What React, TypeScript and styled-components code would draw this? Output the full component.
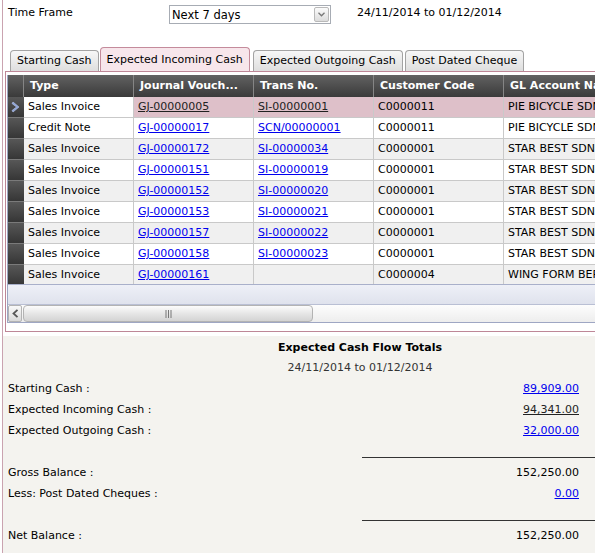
import React from 'react';
import styled, { createGlobalStyle } from 'styled-components';

const GlobalStyle = createGlobalStyle`
  html, body { margin: 0; padding: 0; background: #fff; }
  body {
    font-family: "DejaVu Sans", Verdana, sans-serif;
    font-size: 11px;
    color: #000;
  }
`;

const cols = '16px 110px 120px 120px 130px 200px';

const Page = styled.div`
  width: 595px;
  height: 553px;
  overflow: hidden;
  background: #fff;
`;

const Frame = styled.div`
  margin-left: 2px;
  border-left: 1px solid #caa3b0;
  height: 100%;
  width: 760px;
  display: flex;
  flex-direction: column;
`;

const FilterRow = styled.div`
  display: flex;
  align-items: flex-start;
  padding-top: 5px;
  height: 19px;
`;

const Label = styled.div`
  width: 161px;
  padding: 1px 0 0 5px;
  line-height: 14px;
`;

const Select = styled.div`
  box-sizing: border-box;
  width: 162px;
  height: 19px;
  border: 1px solid #a7acb4;
  background: #fff;
  display: flex;
  align-items: center;
  justify-content: space-between;
  padding-left: 2px;
  font-size: 11.5px;
`;

const DropButton = styled.div`
  box-sizing: border-box;
  width: 15px;
  height: 15px;
  margin-right: 1px;
  border: 1px solid #b9b9b9;
  border-radius: 2px;
  background: linear-gradient(#fbfbfb, #dcdcdc);
  display: flex;
  align-items: center;
  justify-content: center;
`;

const DateText = styled.div`
  margin-left: 26px;
  padding-top: 1px;
  line-height: 14px;
`;

const TabStrip = styled.div`
  margin-top: 23px;
  display: flex;
  align-items: flex-end;
  height: 24px;
  padding-left: 7px;
`;

const Tab = styled.div<{ $active?: boolean }>`
  box-sizing: border-box;
  height: ${p => (p.$active ? '24px' : '21px')};
  padding: 0 6px;
  line-height: ${p => (p.$active ? '23px' : '19px')};
  margin: ${p => (p.$active ? '0 3px 0 -1px' : '0 2px 0 0')};
  border: 1px solid ${p => (p.$active ? '#c48b9b' : '#a3a3a3')};
  border-bottom: none;
  border-radius: 4px 4px 0 0;
  background: ${p => (p.$active ? '#f7e6eb' : 'linear-gradient(#f7f7f7, #dedede)')};
  white-space: nowrap;
`;

const Panel = styled.div`
  margin-left: 2px;
  border: 1px solid #be8797;
  padding: 3px 1px 8px 1px;
  width: 740px;
`;

const Grid = styled.div`
  border: 1px solid #9ea6c3;
  border-top: none;
  width: 698px;
`;

const HeadRow = styled.div`
  display: grid;
  grid-template-columns: ${cols};
  height: 22px;
  background: linear-gradient(#626262, #3a3a3a);
`;

const HeadCell = styled.div`
  box-sizing: border-box;
  border-right: 1px solid #858585;
  padding-left: 6px;
  line-height: 22px;
  color: #fff;
  font-weight: bold;
  white-space: nowrap;
  overflow: hidden;
`;

const Body = styled.div`
  height: 187px;
  overflow: hidden;
`;

const Row = styled.div`
  display: grid;
  grid-template-columns: ${cols};
  height: 21px;
`;

const Indicator = styled.div`
  box-sizing: border-box;
  border-bottom: 1px solid #7a7a7a;
  background: linear-gradient(#575757, #363636);
  display: flex;
  align-items: center;
  justify-content: center;
`;

const Cell = styled.div<{ $bg: string }>`
  box-sizing: border-box;
  border-right: 1px solid #c9c9c9;
  border-bottom: 1px solid #c9c9c9;
  background: ${p => p.$bg};
  padding-left: 4px;
  line-height: 20px;
  white-space: nowrap;
  overflow: hidden;
`;

const Link = styled.span<{ $dark?: boolean }>`
  color: ${p => (p.$dark ? '#222' : '#0000ee')};
  text-decoration: underline;
  cursor: pointer;
`;

const Footer = styled.div`
  height: 19px;
  border-top: 1px solid #a9b0ca;
  border-bottom: 1px solid #b9bfd4;
  background: linear-gradient(#eef0f7, #dfe2ed);
`;

const ScrollBar = styled.div`
  display: flex;
  height: 17px;
  background: linear-gradient(#fdfdfd, #ededed);
`;

const ScrollButton = styled.div`
  box-sizing: border-box;
  width: 14px;
  border: 1px solid #b3b3b3;
  border-radius: 2px;
  background: linear-gradient(#f9f9f9, #d9d9d9);
  display: flex;
  align-items: center;
  justify-content: center;
`;

const Thumb = styled.div`
  box-sizing: border-box;
  width: 290px;
  margin-left: 1px;
  border: 1px solid #b3b3b3;
  border-radius: 4px;
  background: linear-gradient(#fcfcfc, #e6e6e6 50%, #d3d3d3);
  display: flex;
  align-items: center;
  justify-content: center;
`;

const Totals = styled.div`
  margin-top: 4px;
  flex: 1;
  background: #f4f3ef;
  width: 714px;
`;

const Title = styled.div`
  margin-top: 5px;
  line-height: 14px;
  font-weight: bold;
  text-align: center;
`;

const SubTitle = styled.div`
  margin-top: 6px;
  line-height: 14px;
  text-align: center;
  color: #333;
`;

const TotalRow = styled.div<{ $gap?: number }>`
  display: flex;
  justify-content: space-between;
  height: 21px;
  line-height: 21px;
  padding: 0 138px 0 5px;
  margin-top: ${p => p.$gap ?? 0}px;
`;

const Rule = styled.div`
  margin: 16px 0 0 359px;
  border-top: 1px solid #333;
`;

type Entry = { type: string; jv: string; trans: string; cust: string; gl: string };

const rows: Entry[] = [
  { type: 'Sales Invoice', jv: 'GJ-00000005', trans: 'SI-00000001', cust: 'C0000011', gl: 'PIE BICYCLE SDN BHD' },
  { type: 'Credit Note', jv: 'GJ-00000017', trans: 'SCN/00000001', cust: 'C0000011', gl: 'PIE BICYCLE SDN BHD' },
  { type: 'Sales Invoice', jv: 'GJ-00000172', trans: 'SI-00000034', cust: 'C0000001', gl: 'STAR BEST SDN BHD' },
  { type: 'Sales Invoice', jv: 'GJ-00000151', trans: 'SI-00000019', cust: 'C0000001', gl: 'STAR BEST SDN BHD' },
  { type: 'Sales Invoice', jv: 'GJ-00000152', trans: 'SI-00000020', cust: 'C0000001', gl: 'STAR BEST SDN BHD' },
  { type: 'Sales Invoice', jv: 'GJ-00000153', trans: 'SI-00000021', cust: 'C0000001', gl: 'STAR BEST SDN BHD' },
  { type: 'Sales Invoice', jv: 'GJ-00000157', trans: 'SI-00000022', cust: 'C0000001', gl: 'STAR BEST SDN BHD' },
  { type: 'Sales Invoice', jv: 'GJ-00000158', trans: 'SI-00000023', cust: 'C0000001', gl: 'STAR BEST SDN BHD' },
  { type: 'Sales Invoice', jv: 'GJ-00000161', trans: '', cust: 'C0000004', gl: 'WING FORM BERHAD' },
];

const tabs = ['Starting Cash', 'Expected Incoming Cash', 'Expected Outgoing Cash', 'Post Dated Cheque'];

const RowArrow = () => (
  <svg width="10" height="12" viewBox="0 0 10 12">
    <path d="M2 1 L8 6 L2 11 L1 9.5 L5.5 6 L1 2.5 Z" fill="#8ea3d6" stroke="#b9c8ee" strokeWidth="0.6" />
  </svg>
);

const App: React.FC = () => {
  return (
    <Page>
      <GlobalStyle />
      <Frame>
        <FilterRow>
          <Label>Time Frame</Label>
          <Select>
            <span>Next 7 days</span>
            <DropButton>
              <svg width="7" height="5" viewBox="0 0 7 5">
                <path d="M0.5 0.8 L3.5 3.8 L6.5 0.8" fill="none" stroke="#777" strokeWidth="1.3" />
              </svg>
            </DropButton>
          </Select>
          <DateText>24/11/2014 to 01/12/2014</DateText>
        </FilterRow>

        <TabStrip>
          {tabs.map((t, i) => (
            <Tab key={t} $active={i === 1}>{t}</Tab>
          ))}
        </TabStrip>

        <Panel>
          <Grid>
            <HeadRow>
              <HeadCell />
              <HeadCell>Type</HeadCell>
              <HeadCell>Journal Vouch...</HeadCell>
              <HeadCell>Trans No.</HeadCell>
              <HeadCell>Customer Code</HeadCell>
              <HeadCell>GL Account Name</HeadCell>
            </HeadRow>
            <Body>
              {rows.map((r, i) => {
                const selected = i === 0;
                const bg = selected ? '#dec0c9' : i % 2 === 0 ? '#f0f0f0' : '#fff';
                return (
                  <Row key={r.jv}>
                    <Indicator>{selected && <RowArrow />}</Indicator>
                    <Cell $bg={selected ? '#fff' : bg}>{r.type}</Cell>
                    <Cell $bg={bg}><Link $dark={selected}>{r.jv}</Link></Cell>
                    <Cell $bg={bg}>{r.trans && <Link $dark={selected}>{r.trans}</Link>}</Cell>
                    <Cell $bg={bg}>{r.cust}</Cell>
                    <Cell $bg={bg}>{r.gl}</Cell>
                  </Row>
                );
              })}
            </Body>
            <Footer />
            <ScrollBar>
              <ScrollButton>
                <svg width="7" height="9" viewBox="0 0 7 9">
                  <path d="M5.5 0.8 L1.5 4.5 L5.5 8.2" fill="none" stroke="#555" strokeWidth="1.8" />
                </svg>
              </ScrollButton>
              <Thumb>
                <svg width="7" height="8" viewBox="0 0 7 8">
                  <path d="M1 0 V8 M3.5 0 V8 M6 0 V8" stroke="#777" strokeWidth="1" />
                </svg>
              </Thumb>
            </ScrollBar>
          </Grid>
        </Panel>

        <Totals>
          <Title>Expected Cash Flow Totals</Title>
          <SubTitle>24/11/2014 to 01/12/2014</SubTitle>
          <TotalRow $gap={3}>
            <span>Starting Cash :</span>
            <Link>89,909.00</Link>
          </TotalRow>
          <TotalRow>
            <span>Expected Incoming Cash :</span>
            <Link $dark>94,341.00</Link>
          </TotalRow>
          <TotalRow>
            <span>Expected Outgoing Cash :</span>
            <Link>32,000.00</Link>
          </TotalRow>
          <Rule />
          <TotalRow $gap={4}>
            <span>Gross Balance :</span>
            <span>152,250.00</span>
          </TotalRow>
          <TotalRow>
            <span>Less: Post Dated Cheques :</span>
            <Link>0.00</Link>
          </TotalRow>
          <Rule />
          <TotalRow $gap={4}>
            <span>Net Balance :</span>
            <span>152,250.00</span>
          </TotalRow>
        </Totals>
      </Frame>
    </Page>
  );
};

export default App;
